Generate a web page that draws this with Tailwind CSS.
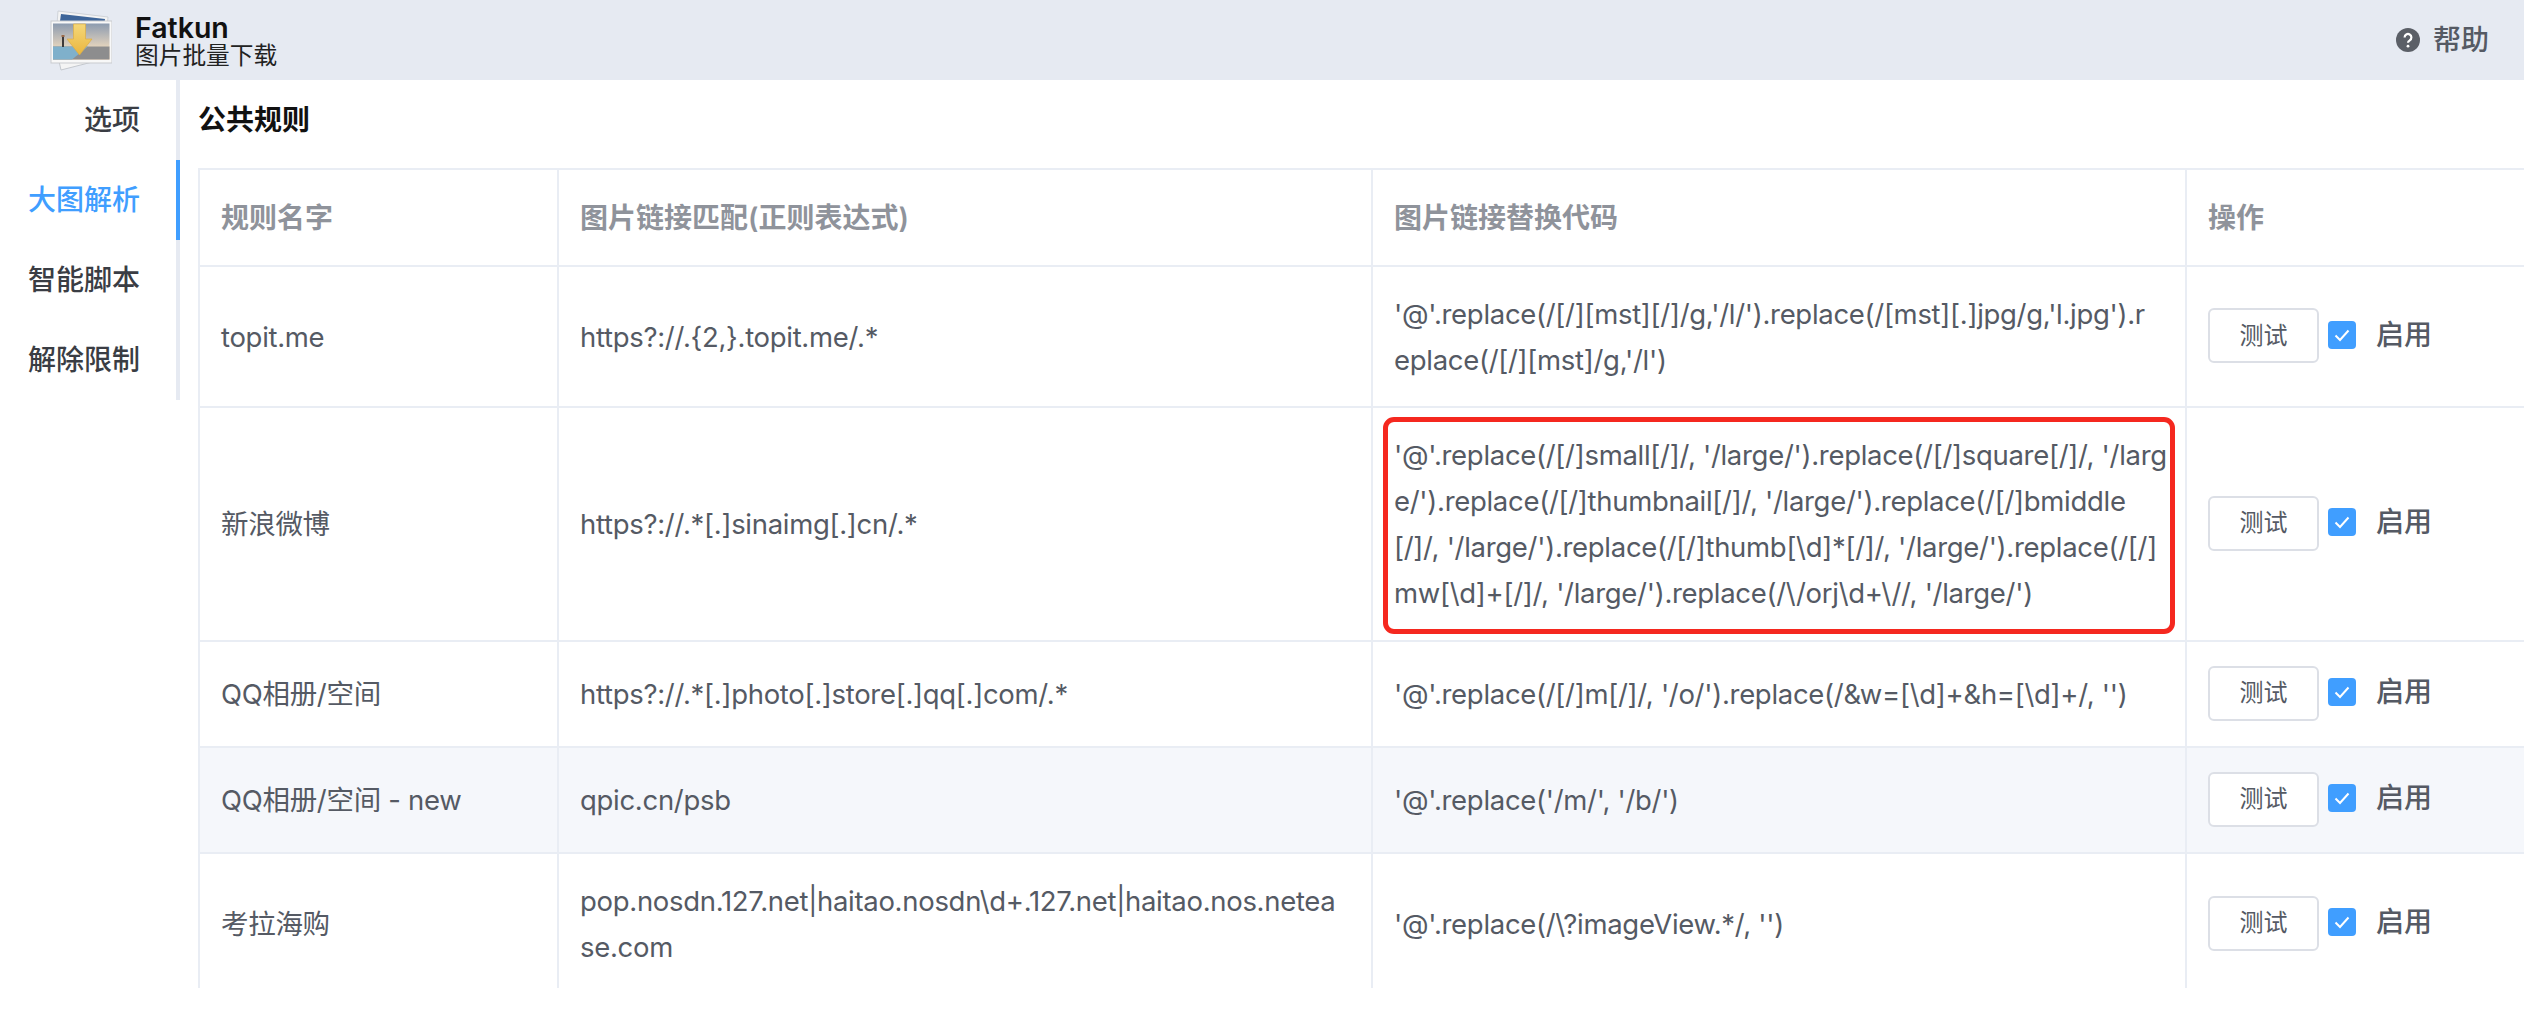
<!DOCTYPE html>
<html lang="zh-CN">
<head>
  <meta charset="UTF-8" />
  <title>Fatkun 图片批量下载</title>
  <script src="https://cdn.jsdelivr.net/npm/@tailwindcss/browser@4"></script>
</head>
<body class="bg-white h-[1028px] overflow-hidden font-['Inter','Noto_Sans_CJK_SC',sans-serif] text-[28px] text-[#555a64]">

  <!-- 顶栏 -->
  <header class="h-20 bg-[#e6eaf2] flex items-center justify-between pl-12 pr-[35px]">
    <div class="flex items-center gap-[23px]">
      <svg class="w-16 h-16" viewBox="0 0 64 64">
        <defs>
          <linearGradient id="sky" x1="0" y1="0" x2="0" y2="1">
            <stop offset="0" stop-color="#8c9bb0"/>
            <stop offset="0.65" stop-color="#e3d3bd"/>
            <stop offset="1" stop-color="#f0c9a0"/>
          </linearGradient>
          <linearGradient id="arrow" x1="0" y1="0" x2="0" y2="1">
            <stop offset="0" stop-color="#f5d778"/>
            <stop offset="1" stop-color="#e9b63f"/>
          </linearGradient>
        </defs>
        <path d="M10 3 L60 9 L58 30 L8 30 Z" fill="#f4f4f4" stroke="#cfd3d9"/>
        <path d="M13 6 L57 11 L56 20 L11 20 Z" fill="#3e6599"/>
        <path d="M8 40 L60 40 L60 50 L13 62 Z" fill="#f4f4f4" stroke="#c4c8ce"/>
        <rect x="3" y="13" width="61" height="42" fill="#f8f8f8" stroke="#c9cbcf"/>
        <rect x="5" y="15.500" width="56.500" height="36" fill="url(#sky)"/>
        <rect x="5" y="38.500" width="56.500" height="13" fill="#8d8d8e"/>
        <path d="M5 38.500 H40 L24 51.500 H5 Z" fill="#7fb0cb"/>
        <rect x="14" y="29" width="2" height="10" fill="#3d3a3a"/>
        <rect x="13.500" y="27" width="3" height="2" fill="#9a6a4a"/>
        <path d="M25.500 16 H37.500 V31 H44 L31.500 47 L19 31 H25.500 Z" fill="url(#arrow)" stroke="#dcae45" stroke-width="0.7"/>
      </svg>
      <div class="flex flex-col">
        <span class="text-[28.500px] leading-[30px] font-semibold text-[#111]">Fatkun</span>
        <span class="text-[23.700px] leading-[25px] text-[#222]">图片批量下载</span>
      </div>
    </div>
    <div class="flex items-center gap-[13px] font-medium">
      <svg class="w-6 h-6" viewBox="0 0 24 24">
        <circle cx="12" cy="12" r="12" fill="#5b5f67"/>
        <path d="M8.600 9.400a3.400 3.400 0 1 1 5.200 2.900c-1.200.8-1.800 1.300-1.800 2.500" fill="none" stroke="#fff" stroke-width="2.200"/>
        <circle cx="12" cy="18.200" r="1.400" fill="#fff"/>
      </svg>
      <span>帮助</span>
    </div>
  </header>

  <div class="flex h-[948px]">
    <!-- 侧边菜单 -->
    <nav class="w-[180px] shrink-0 self-start border-r-4 border-[#e6eaf2] font-medium text-[#3a3d44] text-right">
      <a class="block h-20 leading-[80px] pr-9">选项</a>
      <a class="block h-20 leading-[80px] pr-9 text-[#409eff] -mr-1 border-r-4 border-[#409eff]">大图解析</a>
      <a class="block h-20 leading-[80px] pr-9">智能脚本</a>
      <a class="block h-20 leading-[80px] pr-9">解除限制</a>
    </nav>

    <!-- 内容 -->
    <main class="flex-1 min-w-0 pl-[18px]">
      <h2 class="h-[88px] pt-[20px] leading-[40px] font-semibold text-[#111]">公共规则</h2>
      <div class="h-[820px] overflow-hidden">
        <table class="w-[2326px] table-fixed border-collapse border-l-2 border-t-2 border-[#e9edf4] leading-[46px]">
          <colgroup>
            <col class="w-[359px]" />
            <col class="w-[814px]" />
            <col class="w-[814px]" />
            <col class="w-[339px]" />
          </colgroup>
          <thead class="text-[#8f939b] font-semibold text-left">
            <tr class="h-[97px]">
              <th class="px-[21px] border-r-2 border-b-2 border-[#e9edf4] font-semibold">规则名字</th>
              <th class="px-[21px] border-r-2 border-b-2 border-[#e9edf4] font-semibold">图片链接匹配(正则表达式)</th>
              <th class="px-[21px] border-r-2 border-b-2 border-[#e9edf4] font-semibold">图片链接替换代码</th>
              <th class="px-[21px] border-b-2 border-[#e9edf4] font-semibold">操作</th>
            </tr>
          </thead>
          <tbody class="text-[27.500px] tracking-[-0.3px]">
            <tr class="h-[141px]">
              <td class="px-[21px] border-r-2 border-b-2 border-[#e9edf4]">topit.me</td>
              <td class="px-[21px] border-r-2 border-b-2 border-[#e9edf4]">https?://.{2,}.topit.me/.*</td>
              <td class="px-[21px] border-r-2 border-b-2 border-[#e9edf4] whitespace-nowrap">'@'.replace(/[/][mst][/]/g,'/l/').replace(/[mst][.]jpg/g,'l.jpg').r<br />eplace(/[/][mst]/g,'/l')</td>
              <td class="px-[21px] border-b-2 border-[#e9edf4]">
                <div class="flex items-center pb-[2px] text-[28px] tracking-normal">
                  <button class="w-[111px] h-[55px] border-2 border-[#dcdfe6] rounded-md text-[24px] leading-none bg-white">测试</button>
                  <span class="ml-[9px] mb-[2px] w-7 h-7 rounded bg-[#409eff] flex items-center justify-center">
                    <svg class="w-4 h-4" viewBox="0 0 16 16"><path d="M1.500 8.500 L6 13 L14.500 3.500" fill="none" stroke="#fff" stroke-width="2"/></svg>
                  </span>
                  <span class="ml-5 mb-[2px] font-medium">启用</span>
                </div>
              </td>
            </tr>
            <tr class="h-[234px]">
              <td class="px-[21px] border-r-2 border-b-2 border-[#e9edf4]">新浪微博</td>
              <td class="px-[21px] border-r-2 border-b-2 border-[#e9edf4]">https?://.*[.]sinaimg[.]cn/.*</td>
              <td class="relative px-[21px] border-r-2 border-b-2 border-[#e9edf4] whitespace-nowrap">'@'.replace(/[/]small[/]/, '/large/').replace(/[/]square[/]/, '/larg<br />e/').replace(/[/]thumbnail[/]/, '/large/').replace(/[/]bmiddle<br />[/]/, '/large/').replace(/[/]thumb[\d]*[/]/, '/large/').replace(/[/]<br />mw[\d]+[/]/, '/large/').replace(/\/orj\d+\//, '/large/')
                <div class="absolute left-[10px] right-[10px] top-[9px] bottom-[6px] border-[5px] border-[#f5281f] rounded-[11px]"></div>
              </td>
              <td class="px-[21px] border-b-2 border-[#e9edf4]">
                <div class="flex items-center pb-[2px] text-[28px] tracking-normal">
                  <button class="w-[111px] h-[55px] border-2 border-[#dcdfe6] rounded-md text-[24px] leading-none bg-white">测试</button>
                  <span class="ml-[9px] mb-[2px] w-7 h-7 rounded bg-[#409eff] flex items-center justify-center">
                    <svg class="w-4 h-4" viewBox="0 0 16 16"><path d="M1.500 8.500 L6 13 L14.500 3.500" fill="none" stroke="#fff" stroke-width="2"/></svg>
                  </span>
                  <span class="ml-5 mb-[2px] font-medium">启用</span>
                </div>
              </td>
            </tr>
            <tr class="h-[106px]">
              <td class="px-[21px] border-r-2 border-b-2 border-[#e9edf4]">QQ相册/空间</td>
              <td class="px-[21px] border-r-2 border-b-2 border-[#e9edf4]">https?://.*[.]photo[.]store[.]qq[.]com/.*</td>
              <td class="px-[21px] border-r-2 border-b-2 border-[#e9edf4]">'@'.replace(/[/]m[/]/, '/o/').replace(/&amp;w=[\d]+&amp;h=[\d]+/, '')</td>
              <td class="px-[21px] border-b-2 border-[#e9edf4]">
                <div class="flex items-center pb-[2px] text-[28px] tracking-normal">
                  <button class="w-[111px] h-[55px] border-2 border-[#dcdfe6] rounded-md text-[24px] leading-none bg-white">测试</button>
                  <span class="ml-[9px] mb-[2px] w-7 h-7 rounded bg-[#409eff] flex items-center justify-center">
                    <svg class="w-4 h-4" viewBox="0 0 16 16"><path d="M1.500 8.500 L6 13 L14.500 3.500" fill="none" stroke="#fff" stroke-width="2"/></svg>
                  </span>
                  <span class="ml-5 mb-[2px] font-medium">启用</span>
                </div>
              </td>
            </tr>
            <tr class="h-[106px] bg-[#f5f7fb]">
              <td class="px-[21px] border-r-2 border-b-2 border-[#e9edf4]">QQ相册/空间 - new</td>
              <td class="px-[21px] border-r-2 border-b-2 border-[#e9edf4]">qpic.cn/psb</td>
              <td class="px-[21px] border-r-2 border-b-2 border-[#e9edf4]">'@'.replace('/m/', '/b/')</td>
              <td class="px-[21px] border-b-2 border-[#e9edf4]">
                <div class="flex items-center pb-[2px] text-[28px] tracking-normal">
                  <button class="w-[111px] h-[55px] border-2 border-[#dcdfe6] rounded-md text-[24px] leading-none bg-white">测试</button>
                  <span class="ml-[9px] mb-[2px] w-7 h-7 rounded bg-[#409eff] flex items-center justify-center">
                    <svg class="w-4 h-4" viewBox="0 0 16 16"><path d="M1.500 8.500 L6 13 L14.500 3.500" fill="none" stroke="#fff" stroke-width="2"/></svg>
                  </span>
                  <span class="ml-5 mb-[2px] font-medium">启用</span>
                </div>
              </td>
            </tr>
            <tr class="h-[141px]">
              <td class="px-[21px] border-r-2 border-[#e9edf4]">考拉海购</td>
              <td class="px-[21px] border-r-2 border-[#e9edf4] whitespace-nowrap">pop.nosdn.127.net|haitao.nosdn\d+.127.net|haitao.nos.netea<br />se.com</td>
              <td class="px-[21px] border-r-2 border-[#e9edf4]">'@'.replace(/\?imageView.*/, '')</td>
              <td class="px-[21px]">
                <div class="flex items-center pb-[2px] text-[28px] tracking-normal">
                  <button class="w-[111px] h-[55px] border-2 border-[#dcdfe6] rounded-md text-[24px] leading-none bg-white">测试</button>
                  <span class="ml-[9px] mb-[2px] w-7 h-7 rounded bg-[#409eff] flex items-center justify-center">
                    <svg class="w-4 h-4" viewBox="0 0 16 16"><path d="M1.500 8.500 L6 13 L14.500 3.500" fill="none" stroke="#fff" stroke-width="2"/></svg>
                  </span>
                  <span class="ml-5 mb-[2px] font-medium">启用</span>
                </div>
              </td>
            </tr>
          </tbody>
        </table>
      </div>
    </main>
  </div>
</body>
</html>
